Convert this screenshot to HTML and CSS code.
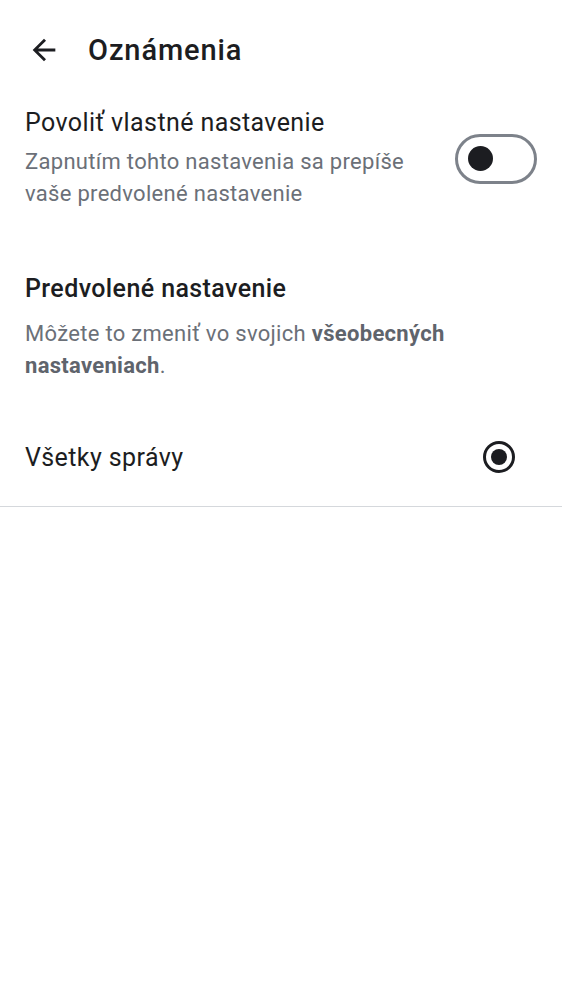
FILE: index.html
```html
<!DOCTYPE html>
<html lang="sk">
<head>
<meta charset="utf-8">
<link rel="stylesheet" href="styles.css">
</head>
<body>
<header class="appbar">
  <svg class="back" viewBox="0 0 24 24" width="34" height="34"><path d="M20 11H7.83l5.59-5.59L12 4l-8 8 8 8 1.41-1.41L7.83 13H20v-2z" fill="#1c1d21"/></svg>
  <h1 class="title">Oznámenia</h1>
</header>
<section class="toggle-row">
  <div class="toggle-text">
    <div class="row-title">Povoliť vlastné nastavenie</div>
    <div class="row-sub">Zapnutím tohto nastavenia sa prepíše vaše predvolené nastavenie</div>
  </div>
  <div class="switch"><span class="knob"></span></div>
</section>
<section class="defaults">
  <h2 class="section-title">Predvolené nastavenie</h2>
  <p class="section-desc">Môžete to zmeniť vo svojich <b>všeobecných</b> <b>nastaveniach</b>.</p>
</section>
<div class="option">
  <span class="option-label">Všetky správy</span>
  <span class="radio"><span class="dot"></span></span>
</div>
</body>
</html>
```
FILE: styles.css
```css
html, body { margin: 0; padding: 0; background: #fff; }
body { font-family: Roboto, "Noto Sans", sans-serif; color: #1c1d21; }
.appbar { height: 100px; display: flex; align-items: center; padding-left: 27px; gap: 27px; }
.back { display: block; }
.title { margin: 0; font-size: 29px; font-weight: 500; line-height: 32px; letter-spacing: 0.9px; }
.toggle-row { display: flex; align-items: center; padding: 7px 25px 0 25px; }
.toggle-text { flex: 1; }
.row-title { font-size: 25px; line-height: 32px; margin-bottom: 7px; letter-spacing: 0.4px; }
.row-sub { font-size: 22px; line-height: 32px; color: #6b7078; max-width: 410px; letter-spacing: 0.3px; }
.switch { border: 3px solid #7d828a; border-radius: 26px; display: flex; align-items: center; padding-left: 10px; box-sizing: border-box; width: 82px; height: 50px; flex: none; }
.knob { width: 25px; height: 25px; border-radius: 50%; background: #1c1d21; }
.defaults { padding: 63px 25px 0 25px; }
.section-title { margin: 0; font-size: 25px; font-weight: 500; line-height: 32px; letter-spacing: 0.4px; }
.section-desc { margin: 13px 0 0; font-size: 22px; line-height: 32px; color: #6b7078; letter-spacing: 0.3px; }
.section-desc b { font-weight: 700; color: #5f646c; }
.option { display: flex; align-items: center; justify-content: space-between; height: 125px; padding: 26px 47px 0 25px; border-bottom: 1px solid #d5d8dc; box-sizing: border-box; }
.option-label { font-size: 25px; letter-spacing: 0.4px; }
.radio { width: 32px; height: 32px; border: 3px solid #1c1d21; border-radius: 50%; box-sizing: border-box; display: flex; align-items: center; justify-content: center; }
.dot { width: 16px; height: 16px; border-radius: 50%; background: #1c1d21; }
```
